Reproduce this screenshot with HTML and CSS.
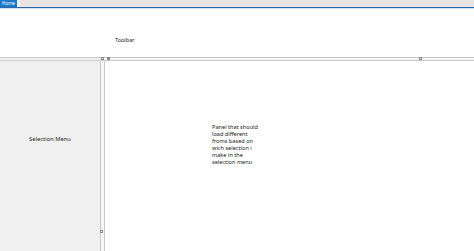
FILE: index.html
```html
<!DOCTYPE html>
<html>
<head>
<meta charset="utf-8">
<link rel="stylesheet" href="styles.css">
</head>
<body>
<div class="app">
  <div class="tabs">
    <div class="tab-home">Home</div>
    <div class="tab-gap"></div>
  </div>
  <div class="ribbon-line"></div>
  <div class="toolbar"><span class="toolbar-label">Toolbar</span></div>
  <div class="hsplit">
    <div class="hsplit-left"></div>
    <div class="hsplit-right">
      <span class="grip grip-a"></span>
      <span class="grip grip-b"></span>
      <span class="grip grip-c"></span>
    </div>
  </div>
  <div class="main">
    <div class="menu"><span class="menu-label">Selection Menu</span></div>
    <div class="vsplit"><span class="grip grip-v"></span></div>
    <div class="panel">
      <p class="panel-text">Panel that should load different froms based on wich selection i make in the selection menu</p>
    </div>
  </div>
</div>
</body>
</html>
```
FILE: styles.css
```css
html, body {
  margin: 0;
  padding: 0;
  background: #ffffff;
}
.app {
  width: 474px;
  height: 251px;
  display: flex;
  flex-direction: column;
  font-family: "Noto Sans", "Open Sans", sans-serif;
  color: #222222;
  overflow: hidden;
}
.tabs {
  height: 7px;
  display: flex;
  background: #e8e4e2;
}
.tab-home {
  width: 17px;
  background: #1b79c9;
  color: #fff;
  font-size: 4.5px;
  line-height: 7px;
  text-align: center;
}
.tab-gap {
  width: 3px;
  background: #f4f2f0;
}
.ribbon-line {
  height: 1px;
  background: #2c67a8;
  border-bottom: 1px solid #cfe3f3;
}
.toolbar {
  height: 48px;
  position: relative;
  background: #fff;
}
.toolbar-label {
  position: absolute;
  left: 115px;
  top: 27px;
  font-size: 5.5px;
  line-height: 8px;
}
.hsplit {
  height: 4px;
  display: flex;
}
.hsplit-left {
  width: 101px;
  border-top: 1px solid #cfcfcf;
  border-bottom: 1px solid #cfcfcf;
  background: #f0f0f0;
}
.hsplit-right {
  flex: 1;
  position: relative;
  border-top: 1px solid #c8c8c8;
  border-bottom: 1px solid #c8c8c8;
  background: #f6f6f6;
}
.grip {
  position: absolute;
  width: 3px;
  height: 3px;
  border: 1px solid #8a8a8a;
  background: #fff;
  box-sizing: border-box;
}
.grip-a { left: 0px; top: -1px; }
.grip-b { left: 6px; top: -1px; background: #6a7a8a; }
.grip-c { left: 318px; top: -1px; }
.main {
  flex: 1;
  display: flex;
}
.menu {
  width: 100px;
  background: #f0f0f0;
  display: flex;
  align-items: flex-start;
  justify-content: center;
  padding-top: 74px;
  box-sizing: border-box;
}
.menu-label {
  font-size: 5.8px;
  line-height: 8px;
}
.vsplit {
  width: 3px;
  position: relative;
  border-left: 1px solid #c8c8c8;
  border-right: 1px solid #c8c8c8;
  background: #f6f6f6;
}
.grip-v { left: -1px; top: 169px; }
.panel {
  flex: 1;
  background: #fff;
  position: relative;
}
.panel-text {
  margin: 0;
  position: absolute;
  left: 107px;
  top: 63px;
  width: 48px;
  font-size: 5.6px;
  line-height: 7px;
}
```
